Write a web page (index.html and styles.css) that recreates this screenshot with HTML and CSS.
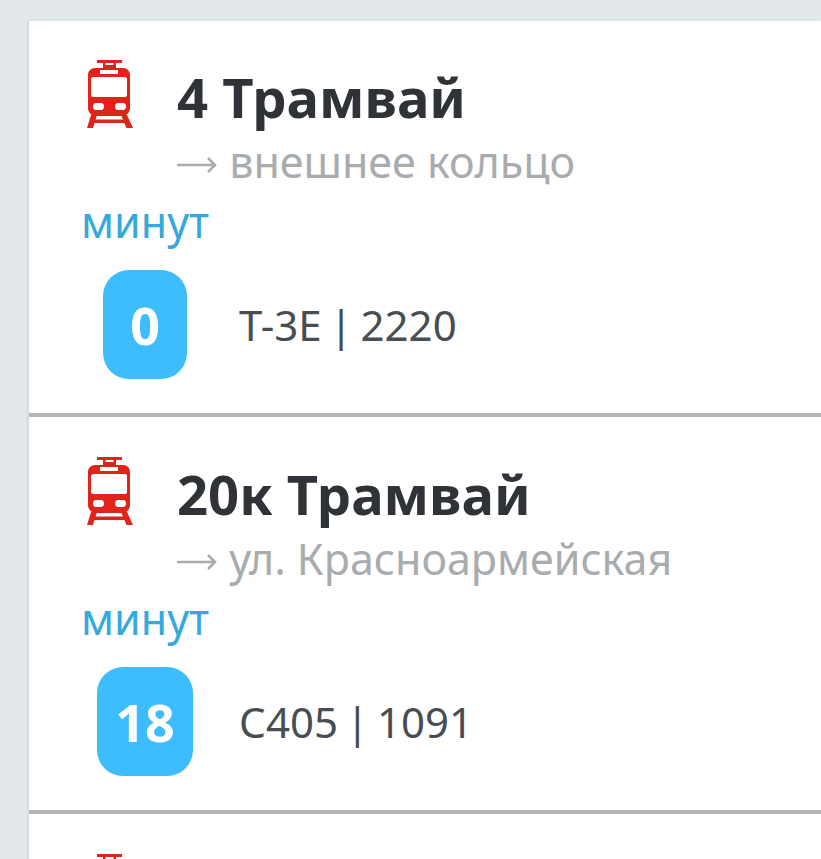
FILE: index.html
```html
<!DOCTYPE html>
<html lang="ru">
<head>
    <meta charset="UTF-8">
    <title>Транспорт</title>
    <link rel="stylesheet" href="styles.css">
</head>
<body>
    <svg class="sprite" width="0" height="0">
        <symbol id="tram" viewBox="87 60 46 69">
            <!-- кузов с окнами и фарами -->
            <path fill="#e2231a" fill-rule="evenodd" d="M95 68h28c4 0 7 3 7 7v33c0 4-3 7-6 8h-30c-3-1-6-4-6-8v-33c0-4 3-7 7-7zM100 70v4h18v-4zM93 77c-1 0-2 1-2 2v16c0 1 1 2 2 2h32c1 0 2-1 2-2v-16c0-1-1-2-2-2zM96 103c-2 0-3 1.500-3 3.500s1 3.500 3 3.500h5c2 0 3-1.500 3-3.500s-1-3.500-3-3.500zM118 103c-2 0-3 1.500-3 3.500s1 3.500 3 3.500h5c2 0 3-1.500 3-3.500s-1-3.500-3-3.500z"/>
            <!-- токоприёмник, подножка -->
            <path fill="#e2231a" d="M97 60h25v3h-25zM103 63h2.500v2h8v-2h2.500v5h-13zM91 115h6l-4 13h-6zM121 115h6l6 13h-6.500zM94 119.500h31v3.500h-31z"/>
        </symbol>
    </svg>

    <ul class="routes">
        <li class="route">
            <div class="route-head">
                <svg class="route-icon"><use href="#tram"></use></svg>
                <div>
                    <h2 class="route-name">4 Трамвай</h2>
                    <p class="route-dest">
                        <svg class="arrow" viewBox="0 0 40 16"><path d="M0 8h38M31 1l7 7-7 7" fill="none" stroke="#a9acae" stroke-width="2.500"/></svg>
                        внешнее кольцо
                    </p>
                </div>
            </div>
            <p class="units">минут</p>
            <div class="arrival">
                <div class="badge-col"><span class="badge">0</span></div>
                <span class="vehicle">Т-3Е | 2220</span>
            </div>
        </li>
        <li class="route">
            <div class="route-head">
                <svg class="route-icon"><use href="#tram"></use></svg>
                <div>
                    <h2 class="route-name">20к Трамвай</h2>
                    <p class="route-dest">
                        <svg class="arrow" viewBox="0 0 40 16"><path d="M0 8h38M31 1l7 7-7 7" fill="none" stroke="#a9acae" stroke-width="2.500"/></svg>
                        ул. Красноармейская
                    </p>
                </div>
            </div>
            <p class="units">минут</p>
            <div class="arrival">
                <div class="badge-col"><span class="badge">18</span></div>
                <span class="vehicle">С405 | 1091</span>
            </div>
        </li>
        <li class="route">
            <div class="route-head">
                <svg class="route-icon"><use href="#tram"></use></svg>
            </div>
        </li>
    </ul>
</body>
</html>
```

FILE: styles.css
```css
html, body {
    height: 100%;
    overflow: hidden;
}

body {
    font-family: "Noto Sans", "Open Sans", sans-serif;
    background: #e3e8eb;
    margin: 0;
    padding: 21px 0 0 29px;
}

.sprite {
    display: block;
}

.routes {
    list-style-type: none;
    margin: 0;
    padding: 0;
    background: #fff;
    box-shadow: -2px 0 2px #d6dadd;
}

.route {
    height: 392px;
    padding: 0 0 0 52px;
    border-bottom: 4px solid #b4b6b6;
    margin-bottom: 1px;
}

.route-head {
    display: flex;
    gap: 44px;
    padding: 39px 0 0 6px;
}

.route-icon {
    width: 46px;
    height: 69px;
    flex-shrink: 0;
}

.route-name {
    margin: -1px 0 0;
    color: #2f3337;
    font-size: 54.400px;
    font-weight: 700;
    line-height: 76px;
}

.route-dest {
    margin: 2px 0 0;
    color: #a9acae;
    font-size: 43px;
    line-height: 50px;
}

.arrow {
    width: 40px;
    height: 16px;
    margin-right: 1px;
    vertical-align: 5px;
}

.units {
    margin: 10px 0 0;
    color: #35a8dc;
    font-size: 43px;
    line-height: 50px;
}

.arrival {
    display: flex;
    align-items: center;
    margin-top: 23px;
}

.badge-col {
    width: 128px;
    display: flex;
    justify-content: center;
}

.badge {
    box-sizing: border-box;
    min-width: 84px;
    height: 109px;
    padding: 0 18px;
    display: flex;
    align-items: center;
    justify-content: center;
    background: #3dbdfd;
    color: #fff;
    border-radius: 26px;
    font-size: 52px;
    font-weight: 700;
}

.vehicle {
    margin-left: 30px;
    color: #474d52;
    font-size: 42px;
    word-spacing: -3px;
}
```
